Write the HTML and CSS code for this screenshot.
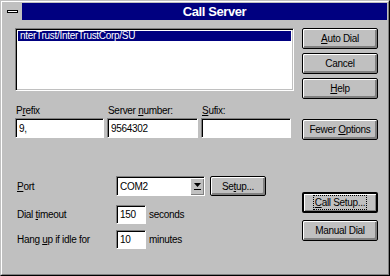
FILE: index.html
```html
<!DOCTYPE html>
<html lang="en">
<head>
    <meta charset="UTF-8">
    <title>Call Server</title>
    <link rel="stylesheet" href="styles.css">
</head>
<body>

<div class="window">
    <div class="frame">
        <div class="titlebar">
            <div class="sysmenu"><span class="sysbar"></span></div>
            <div class="caption">Call Server</div>
        </div>

        <div class="client">
            <div class="main">
                <div class="listbox">
                    <div class="item selected">nterTrust/InterTrustCorp/SU</div>
                </div>

                <div class="fields">
                    <div class="field prefix">
                        <span class="label">P<u>r</u>efix</span>
                        <span class="edit">9,</span>
                    </div>
                    <div class="field">
                        <span class="label">Server <u>n</u>umber:</span>
                        <span class="edit">9564302</span>
                    </div>
                    <div class="field">
                        <span class="label"><u>S</u>ufix:</span>
                        <span class="edit"></span>
                    </div>
                </div>

                <div class="options">
                    <div class="row port-row">
                        <span class="row-label"><u>P</u>ort</span>
                        <div class="combo">
                            <span class="combo-text">COM2</span>
                            <span class="combo-arrow">
                                <svg width="9" height="9" viewBox="0 0 9 9">
                                    <path d="M1 1h7L4.5 5z" fill="#000"/>
                                    <rect x="1" y="7" width="7" height="1" fill="#000"/>
                                </svg>
                            </span>
                        </div>
                        <button class="btn setup"><span>Se<u>t</u>up...</span></button>
                    </div>
                    <div class="row timeout-row">
                        <span class="row-label">Dial <u>t</u>imeout</span>
                        <span class="edit small">150</span>
                        <span class="unit">seconds</span>
                    </div>
                    <div class="row idle-row">
                        <span class="row-label">Hang <u>u</u>p if idle for</span>
                        <span class="edit small">10</span>
                        <span class="unit">minutes</span>
                    </div>
                </div>
            </div>

            <div class="buttons">
                <button class="btn"><span><u>A</u>uto Dial</span></button>
                <button class="btn"><span>Cancel</span></button>
                <button class="btn"><span><u>H</u>elp</span></button>
                <button class="btn fewer"><span>Fewer <u>O</u>ptions</span></button>
                <button class="btn default call-setup"><span class="focus"><u>C</u>all Setup...</span></button>
                <button class="btn manual"><span>Manual Dial</span></button>
            </div>
        </div>
    </div>
</div>

</body>
</html>
```

FILE: styles.css
```css
/* Dialog window */
body {
    margin: 0;
    font-family: "Liberation Sans", Arial, sans-serif;
    font-size: 10px;
    letter-spacing: -0.3px;
    color: #000;
}

.window {
    width: 390px;
    height: 276px;
    box-sizing: border-box;
    background-color: #c0c0c0;
    border: 1px solid #c0c0c0;
    border-right-color: #000;
    border-bottom-color: #000;
}

.frame {
    height: 100%;
    box-sizing: border-box;
    padding: 1px;
    border-left: 1px solid #fff;
    border-top: 1px solid #fff;
    border-right: 1px solid #808080;
    border-bottom: 1px solid #808080;
}

/* Title bar */
.titlebar {
    display: flex;
    height: 17px;
}

.sysmenu {
    width: 19px;
    display: flex;
    align-items: center;
    justify-content: center;
    background-color: #c0c0c0;
}

.sysbar {
    width: 9px;
    height: 1px;
    background-color: #fff;
    border: 1px solid #000;
}

.caption {
    flex: 1;
    background-color: #000080;
    color: #fff;
    font-weight: bold;
    font-size: 13px;
    letter-spacing: -0.4px;
    line-height: 17px;
    text-align: center;
    padding-left: 20px;
}

/* Client area */
.client {
    display: flex;
    padding: 8px 0 0 12px;
}

.main {
    width: 279px;
}

.listbox {
    height: 63px;
    box-sizing: border-box;
    background-color: #fff;
    border: 1px solid;
    border-color: #808080 #fff #fff #808080;
    box-shadow: inset 1px 1px #000, inset -1px -1px #c0c0c0;
    padding: 2px 2px 0 2px;
    overflow: hidden;
}

.item {
    height: 10px;
    line-height: 10px;
    padding-left: 2px;
    white-space: nowrap;
}

.item.selected {
    background-color: #000080;
    color: #fff;
}

/* Prefix / number / suffix */
.fields {
    display: grid;
    grid-template-columns: 89px 91px 90px;
    column-gap: 3px;
    margin-top: 12px;
}

.field {
    display: flex;
    flex-direction: column;
}

.label {
    line-height: 15px;
    padding-left: 1px;
}

.edit {
    height: 20px;
    box-sizing: border-box;
    display: flex;
    align-items: center;
    padding-left: 3px;
    background-color: #fff;
    border: 1px solid;
    border-color: #808080 #fff #fff #808080;
    box-shadow: inset 1px 1px #000;
}

.edit.small {
    width: 30px;
    height: 19px;
}

/* Port, timeout and idle rows */
.options {
    margin-top: 38px;
}

.row {
    display: flex;
    align-items: center;
}

.port-row {
    height: 20px;
}

.timeout-row {
    height: 19px;
    margin-top: 9px;
}

.idle-row {
    height: 19px;
    margin-top: 6px;
}

.row-label {
    width: 99px;
    padding-left: 2px;
}

.unit {
    margin-left: 3px;
}

.combo {
    display: flex;
    width: 89px;
    height: 20px;
    box-sizing: border-box;
    background-color: #fff;
    border: 1px solid;
    border-color: #808080 #fff #fff #808080;
    box-shadow: inset 1px 1px #000;
}

.combo-text {
    flex: 1;
    display: flex;
    align-items: center;
    padding-left: 3px;
}

.combo-arrow {
    width: 14px;
    margin: 1px 0 0 0;
    display: flex;
    align-items: center;
    justify-content: center;
    background-color: #c0c0c0;
    box-shadow: inset 1px 1px #fff, inset -1px -1px #808080;
}

/* Push buttons */
.btn {
    display: flex;
    align-items: center;
    justify-content: center;
    height: 21px;
    box-sizing: border-box;
    padding: 0;
    font-family: inherit;
    font-size: 10px;
    letter-spacing: -0.3px;
    color: #000;
    background-color: #c0c0c0;
    border: 1px solid #000;
    border-radius: 2px;
    box-shadow: inset 1px 1px #fff, inset -2px -2px #808080;
}

.btn.default {
    border-width: 2px;
    box-shadow: inset 1px 1px #fff, inset -1px -1px #808080;
}

.focus {
    outline: 1px dotted #000;
    outline-offset: 1px;
}

.setup {
    width: 56px;
    height: 20px;
    margin-left: 5px;
}

.buttons {
    display: flex;
    flex-direction: column;
    gap: 4px;
    width: 76px;
    margin-left: 8px;
}

.buttons .fewer {
    margin-top: 16px;
}

.buttons .call-setup {
    margin-top: 48px;
}

.buttons .manual {
    margin-top: 3px;
}
```
